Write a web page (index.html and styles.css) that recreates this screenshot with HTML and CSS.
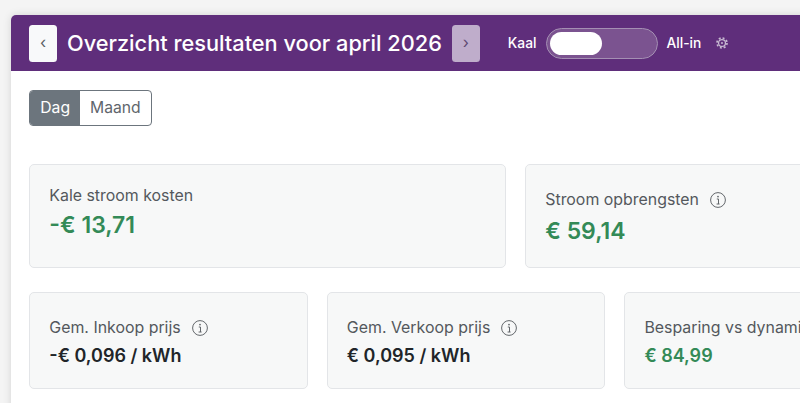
FILE: index.html
```html
<!DOCTYPE html>
<html lang="nl">
<head>
<meta charset="utf-8">
<title>Overzicht resultaten</title>
<link rel="stylesheet" href="styles.css">
</head>
<body>
<div class="page">
  <main class="panel">
    <header class="bar">
      <button class="nav">‹</button>
      <h1 class="title">Overzicht resultaten voor april 2026</h1>
      <button class="nav nav-off">›</button>
      <span class="lbl lbl-kaal">Kaal</span>
      <span class="switch"><span class="knob"></span></span>
      <span class="lbl lbl-all">All-in</span>
      <svg class="gear" viewBox="0 0 16 16" width="12" height="12"><circle cx="8" cy="8" r="4.600" fill="none" stroke="currentColor" stroke-width="1.700"/><circle cx="8" cy="8" r="6.700" fill="none" stroke="currentColor" stroke-width="2.200" stroke-dasharray="2.630 2.630"/><circle cx="8" cy="8" r="1.300" fill="currentColor"/></svg>
    </header>
    <section class="content">
      <div class="tabs"><span class="tab tab-on">Dag</span><span class="tab">Maand</span></div>
      <div class="grid">
        <div class="card wide first">
          <div class="label">Kale stroom kosten</div>
          <div class="value big green">-€ 13,71</div>
        </div>
        <div class="card wide second">
          <div class="label">Stroom opbrengsten <svg class="info" viewBox="0 0 16 16"><circle cx="8" cy="8" r="7.400" fill="none" stroke="currentColor" stroke-width="1"/><circle cx="8" cy="4.600" r=".9" fill="currentColor"/><path d="M6.800 7h1.700v5M6.600 12h3" fill="none" stroke="currentColor" stroke-width="1"/></svg></div>
          <div class="value big green">€ 59,14</div>
        </div>
        <div class="wide-fill"></div>
        <div class="card small">
          <div class="label">Gem. Inkoop prijs <svg class="info" viewBox="0 0 16 16"><circle cx="8" cy="8" r="7.400" fill="none" stroke="currentColor" stroke-width="1"/><circle cx="8" cy="4.600" r=".9" fill="currentColor"/><path d="M6.800 7h1.700v5M6.600 12h3" fill="none" stroke="currentColor" stroke-width="1"/></svg></div>
          <div class="value">-€ 0,096 / kWh</div>
        </div>
        <div class="card small">
          <div class="label">Gem. Verkoop prijs <svg class="info" viewBox="0 0 16 16"><circle cx="8" cy="8" r="7.400" fill="none" stroke="currentColor" stroke-width="1"/><circle cx="8" cy="4.600" r=".9" fill="currentColor"/><path d="M6.800 7h1.700v5M6.600 12h3" fill="none" stroke="currentColor" stroke-width="1"/></svg></div>
          <div class="value">€ 0,095 / kWh</div>
        </div>
        <div class="card small">
          <div class="label">Besparing vs dynamische prijzen</div>
          <div class="value green">€ 84,99</div>
        </div>
      </div>
    </section>
  </main>
</div>
</body>
</html>
```
FILE: styles.css
```css
* { box-sizing: border-box; }
html, body { margin: 0; height: 100%; overflow: hidden; }
body { background: #f4f4f4; font-family: Inter, "Liberation Sans", sans-serif; color: #212529; }
.page { width: 800px; height: 403px; overflow: hidden; padding: 15px 0 0 10.500px; }
.panel { width: 1300px; height: 500px; background: #fff; border-radius: 5px 0 0 0; box-shadow: 0 0 8px rgba(0,0,0,.13); overflow: hidden; }
.bar { height: 56px; background: #5f2e7b; display: flex; align-items: center; padding-left: 18.500px; color: #fff; }
.nav { width: 28px; height: 37px; padding: 0 0 2px; border: 0; border-radius: 3.500px; background: #f8f9fa; color: #5b5f64; font: 400 16px/1 Inter, "Liberation Sans", sans-serif; }
.nav-off { background: #bfadcb; color: #5f4a73; margin-left: 10px; }
.title { margin: 0 0 0 10px; font-size: 21.750px; font-weight: 500; line-height: 30px; white-space: nowrap; }
.lbl { font-size: 13.800px; font-weight: 500; white-space: nowrap; }
.lbl-kaal { margin-left: 28px; }
.switch { width: 112px; height: 31px; margin-left: 9px; padding: 3px; border: 1px solid #a48fb3; border-radius: 16px; background: #7b5390; display: block; }
.knob { display: block; width: 52px; height: 23px; border-radius: 12px; background: #fff; }
.lbl-all { margin-left: 9px; }
.gear { margin-left: 14.500px; color: #c7b9d1; }
.content { padding: 19px 0 0 18.800px; }
.tabs { display: inline-flex; height: 36px; border: 1px solid #6c757d; border-radius: 4px; overflow: hidden; font-size: 15.700px; line-height: 34px; color: #5f666c; vertical-align: top; }
.tab { padding: 0 10px; }
.tab-on { background: #6c757d; color: #fff; }
.grid { display: grid; grid-template-columns: repeat(12, 80px); column-gap: 19.200px; row-gap: 24px; margin-top: 38px; }
.card { background: #f7f8f8; border: 1px solid #e3e5e8; border-radius: 5px; padding: 0 19px; display: flex; flex-direction: column; white-space: nowrap; overflow: hidden; }
.wide { grid-column: span 5; height: 104px; }
.wide-fill { grid-column: span 2; }
.small { grid-column: span 3; height: 97px; padding-top: 24px; }
.first { padding-top: 20px; }
.second { padding-top: 24px; }
.label { font-size: 15.900px; line-height: 22px; color: #54585d; display: flex; align-items: center; }
.info { width: 16px; height: 16px; margin-left: 11px; color: #63676b; flex: none; }
.value { font-size: 18px; font-weight: 600; line-height: 26px; margin-top: 4px; }
.big { font-size: 23px; line-height: 34px; margin-top: 1px; }
.second .big { margin-top: 3px; }
.green { color: #338a57; }
```
